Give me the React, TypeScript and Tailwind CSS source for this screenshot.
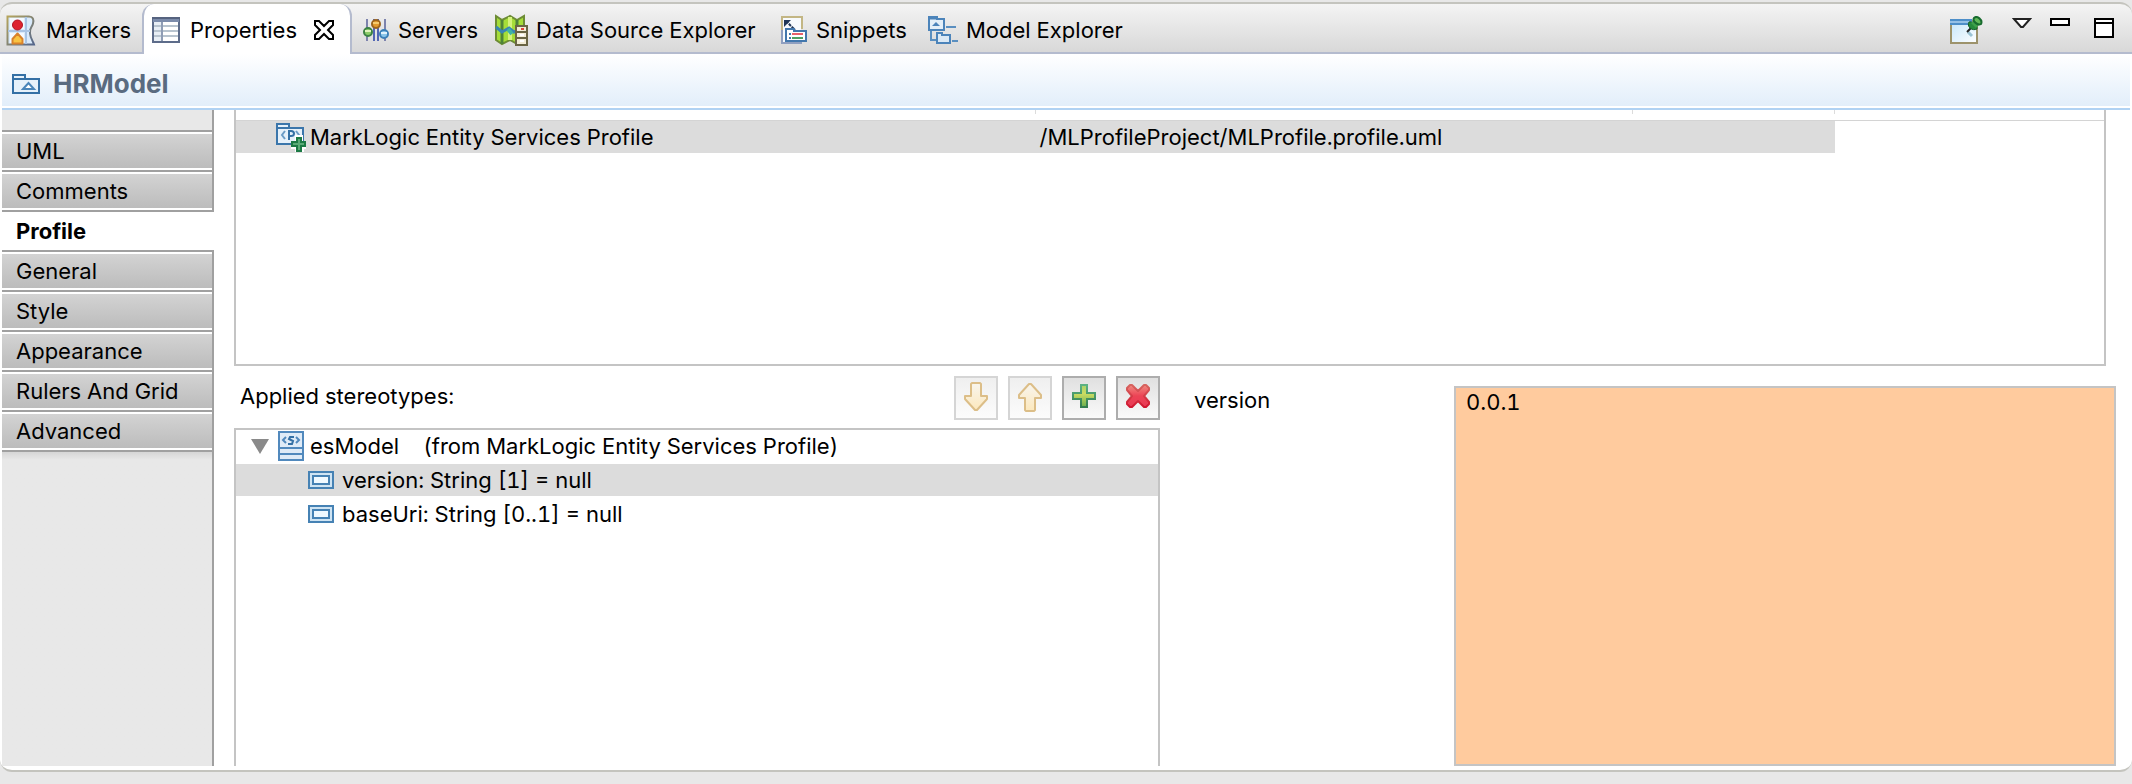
import React, { useState } from 'react';

type IconProps = { className?: string };

const MarkersIcon = ({ className }: IconProps) => (
  <svg className={className} width="30" height="32" viewBox="0 0 30 32" aria-hidden="true">
    <defs>
      <linearGradient id="mkBorder" x1="0" y1="0" x2="1" y2="1">
        <stop offset="0" stopColor="#b5a45c" />
        <stop offset="1" stopColor="#55678c" />
      </linearGradient>
    </defs>
    <path d="M1.500 2.500H23c4 0 5 3 4 7-1 4-4 5-3 10 .5 5 3 8 4 11H1.500z" fill="#d9eafb" stroke="url(#mkBorder)" strokeWidth="2" />
    <path d="M2 17h22M20 3v27" stroke="#a9c4e4" strokeWidth="2" />
    <path d="M4 4h14v11H4zM4 19h14v10H4z" fill="#f4f9ff" />
    <circle cx="11.500" cy="11" r="5" fill="#dd2431" stroke="#b31524" />
    <path d="M6.500 29.500v-4.500l5-5.500 5 5.500v4.500z" fill="#f9c342" stroke="#d9822b" strokeWidth="2" strokeLinejoin="round" />
  </svg>
);

const PropertiesIcon = ({ className }: IconProps) => (
  <svg className={className} width="28" height="26" viewBox="0 0 28 26" aria-hidden="true">
    <path d="M1 1h26v24H1z" fill="#fff" stroke="#5d6c8a" strokeWidth="2" />
    <path d="M1 1h26v4H1z" fill="#7c8cab" />
    <path d="M0 1h28" stroke="#56637f" strokeWidth="2" />
    <path d="M2 5h8v19H2z" fill="#e8eef5" />
    <path d="M2 9h24M2 14h24M2 19h24" stroke="#b8c4cf" strokeWidth="2" />
    <path d="M10 5v19" stroke="#8f9db5" strokeWidth="2" />
  </svg>
);

const CloseIcon = () => (
  <svg width="22" height="22" viewBox="0 0 22 22" aria-hidden="true">
    <path d="M2 2h4l5 5 5-5h4v4l-5 5 5 5v4h-4l-5-5-5 5H2v-4l5-5-5-5z" fill="#fff" stroke="#000" strokeWidth="2" />
  </svg>
);

const ServersIcon = ({ className }: IconProps) => (
  <svg className={className} width="28" height="26" viewBox="0 0 28 26" aria-hidden="true">
    <path d="M5 2v22M23 2v22" stroke="#7d83ad" strokeWidth="2" />
    <path d="M12 2v22M16 2v22" stroke="#5367b4" strokeWidth="2" />
    <circle cx="14" cy="7" r="4" fill="#e39a2c" stroke="#9d641c" strokeWidth="2" />
    <path d="M11 6h6" stroke="#f7ca6c" strokeWidth="2" />
    <circle cx="6" cy="15" r="4" fill="#8bcb69" stroke="#3c8244" strokeWidth="2" />
    <path d="M3 14h6" stroke="#e1f4bd" strokeWidth="2" />
    <circle cx="22" cy="17" r="4" fill="#8bc6ea" stroke="#3c80b8" strokeWidth="2" />
    <path d="M19 16h6" stroke="#dff2fc" strokeWidth="2" />
  </svg>
);

const DataSourceIcon = ({ className }: IconProps) => (
  <svg className={className} width="34" height="32" viewBox="0 0 34 32" aria-hidden="true">
    <path d="M2 2l6 4 8-4 7 4 7-4v25l-7 3-7-4-8 4-6-4z" fill="#a5dd38" stroke="#6d8c35" strokeWidth="2" />
    <path d="M8 6v24M23 6v24" stroke="#4e8438" strokeWidth="3" />
    <path d="M16 3v23" stroke="#d4f37b" strokeWidth="4" />
    <path d="M2 13l6 5 7-4 5 4 10-4" stroke="#3985b4" strokeWidth="3" fill="none" />
    <path d="M14 15l4 5" stroke="#3fb4a3" strokeWidth="4" />
    <path d="M22 12h11v19H22z" fill="#f2ecd6" stroke="#6a6544" strokeWidth="2" />
    <path d="M22 18h11M22 24h11" stroke="#6a6544" strokeWidth="2" />
    <path d="M27 15h3" stroke="#e0453a" strokeWidth="2" />
    <path d="M26 21h4M26 27h4" stroke="#fff" strokeWidth="2" />
  </svg>
);

const SnippetsIcon = ({ className }: IconProps) => (
  <svg className={className} width="28" height="28" viewBox="0 0 28 28" aria-hidden="true">
    <path d="M2 1h19v26H2z" fill="#f7fafd" />
    <path d="M2 26V1h20v12" fill="none" stroke="#c3b684" strokeWidth="2" />
    <path d="M2 14v13h20" fill="none" stroke="#8f9fc0" strokeWidth="2" />
    <path d="M6 5l9 9" stroke="#203657" strokeWidth="2" strokeDasharray="3 1" />
    <path d="M4 4h7L4 11z" fill="#203657" />
    <path d="M6 13h8v2h12v10H6z" fill="#fff" stroke="#4277ad" strokeWidth="2" />
    <path d="M9 18h2M9 22h2" stroke="#4277ad" strokeWidth="2" />
    <path d="M12 18h11" stroke="#e8606a" strokeWidth="2" />
    <path d="M12 22h11" stroke="#4f9f62" strokeWidth="2" />
  </svg>
);

const ModelExplorerIcon = ({ className }: IconProps) => (
  <svg className={className} width="30" height="28" viewBox="0 0 30 28" aria-hidden="true">
    <path d="M3 14v10h7" fill="none" stroke="#5a8fc0" strokeWidth="2" />
    <path d="M1 1h8v2h7v11H1z" fill="#e4eff8" stroke="#4c84ba" strokeWidth="2" />
    <path d="M1 2h8" stroke="#4c84ba" strokeWidth="3" />
    <path d="M4 10l4-4 4 4z" fill="#4c84ba" />
    <path d="M18 11h10M24 25h6" stroke="#5a8fc0" strokeWidth="2" />
    <path d="M9 17h5v2h8v8H9z" fill="#dbe9f5" stroke="#4c84ba" strokeWidth="2" />
  </svg>
);

const PinIcon = () => (
  <svg width="34" height="30" viewBox="0 0 34 30" aria-hidden="true">
    <defs>
      <linearGradient id="pinPage" x1="0" y1="0" x2="1" y2="1">
        <stop offset="0" stopColor="#c5e6fb" />
        <stop offset="1" stopColor="#fff" />
      </linearGradient>
    </defs>
    <path d="M1 5h26v22H1z" fill="url(#pinPage)" stroke="#9d936c" strokeWidth="2" />
    <path d="M0 3h22v6H0z" fill="#4e8fc9" />
    <path d="M0 6h20" stroke="#95c0e6" strokeWidth="2" />
    <path d="M18 16l4 4" stroke="#9bc3d4" strokeWidth="3" />
    <path d="M17 16l6-6" stroke="#222" strokeWidth="2" />
    <path d="M19 6c-1 2-1 4 1 6 2 2 5 2 7 1 1-3-4-8-8-7z" fill="#268b3c" stroke="#145f2a" />
    <path d="M21 7l5-5 5 5-5 5z" fill="#3fa04a" />
    <path d="M24 2c3-3 9 2 7 6-3 2-9-3-7-6z" fill="#62b959" stroke="#176b2e" strokeWidth="2" />
  </svg>
);

const MenuIcon = () => (
  <svg width="20" height="12" viewBox="0 0 20 12" aria-hidden="true">
    <path d="M2 1h16l-7 8h-2z" fill="#fff" stroke="#222" strokeWidth="2" />
  </svg>
);

const MinimizeIcon = () => (
  <svg width="20" height="8" viewBox="0 0 20 8" aria-hidden="true">
    <path d="M1 1h18v6H1z" fill="#fff" stroke="#000" strokeWidth="2" />
  </svg>
);

const MaximizeIcon = () => (
  <svg width="20" height="20" viewBox="0 0 20 20" aria-hidden="true">
    <path d="M1 1h18v18H1zM1 5h18" fill="#fff" stroke="#000" strokeWidth="2" />
  </svg>
);

const ModelIcon = () => (
  <svg width="30" height="22" viewBox="0 0 30 22" aria-hidden="true">
    <path d="M2 2h12v4h14v14H2z" fill="#e6f1fa" stroke="#3470a5" strokeWidth="2" />
    <path d="M2 6h13" stroke="#3470a5" strokeWidth="2" />
    <path d="M12 16l5.500-6 5.500 6z" fill="#fff" stroke="#4a86ba" strokeWidth="2" />
  </svg>
);

const ProfileIcon = ({ className }: IconProps) => (
  <svg className={className} width="31" height="30" viewBox="0 0 31 30" aria-hidden="true">
    <path d="M2 2h12v4h14v16H2z" fill="#e6f1fa" stroke="#3b76ab" strokeWidth="2" />
    <path d="M2 6h13" stroke="#3b76ab" strokeWidth="2" />
    <path d="M10 9l-3 4 3 4M21 9l3 4-3 4" fill="none" stroke="#6b9cc6" strokeWidth="2" />
    <path d="M14 18V9h2c4 0 4 5 0 5h-2" fill="none" stroke="#3470a5" strokeWidth="2" />
    <path d="M20 13h8v6h3v8h-2v3h-9v-3h-4v-8h4z" fill="#fff" />
    <path d="M22 16h4v4h4v4h-4v5h-4v-5h-5v-4h5z" fill="#5aab77" stroke="#1c7a45" strokeWidth="2" />
  </svg>
);

const StereotypeIcon = ({ className }: IconProps) => (
  <svg className={className} width="26" height="30" viewBox="0 0 26 30" aria-hidden="true">
    <path d="M1 1h24v28H1z" fill="#dfebf7" stroke="#5189bd" strokeWidth="2" />
    <path d="M1 17h24M1 23h24" stroke="#5189bd" strokeWidth="2" />
    <path d="M8 6L5 9l3 3M18 6l3 3-3 3" fill="none" stroke="#5189bd" strokeWidth="2" />
    <path d="M16 6h-4l-1 2 4 2-1 3h-4" fill="none" stroke="#3470a5" strokeWidth="2" />
  </svg>
);

const PropertyIcon = ({ className }: IconProps) => (
  <svg className={className} width="26" height="18" viewBox="0 0 26 18" aria-hidden="true">
    <path d="M1 1h24v16H1z" fill="#cfe4f3" stroke="#4682b4" strokeWidth="2" />
    <path d="M5 5h16v8H5z" fill="#f0f9ff" stroke="#4682b4" strokeWidth="2" />
  </svg>
);

const ArrowIcon = ({ up = false }: { up?: boolean }) => (
  <svg width="26" height="30" viewBox="0 0 26 30" aria-hidden="true" className={up ? 'rotate-180' : ''}>
    <defs>
      <linearGradient id={up ? 'arrowUp' : 'arrowDown'} x1="0" y1={up ? 1 : 0} x2="0" y2={up ? 0 : 1}>
        <stop offset="0" stopColor="#f8f5ee" />
        <stop offset="1" stopColor="#fce8bd" />
      </linearGradient>
    </defs>
    <path d="M9 1h8l1 1v12h6v3L14 28h-2L2 17v-3h6V2z" fill={up ? 'url(#arrowUp)' : 'url(#arrowDown)'} stroke="#dcbe88" strokeWidth="2" strokeLinejoin="round" />
  </svg>
);

const AddIcon = () => (
  <svg width="26" height="26" viewBox="0 0 26 26" aria-hidden="true">
    <defs>
      <linearGradient id="addFill" x1="0" y1="0" x2="0" y2="1">
        <stop offset="0" stopColor="#a9d26c" />
        <stop offset="0.400" stopColor="#cbdc62" />
        <stop offset="1" stopColor="#69ae4d" />
      </linearGradient>
      <linearGradient id="addEdge" x1="0" y1="0" x2="0" y2="1">
        <stop offset="0" stopColor="#5cb283" />
        <stop offset="1" stopColor="#337c4e" />
      </linearGradient>
    </defs>
    <path d="M10 2h6v8h8v6h-8v8h-6v-8H2v-6h8z" fill="url(#addFill)" stroke="url(#addEdge)" strokeWidth="2" />
  </svg>
);

const RemoveIcon = () => (
  <svg width="26" height="26" viewBox="0 0 26 26" aria-hidden="true">
    <defs>
      <linearGradient id="removeFill" x1="0" y1="0" x2="0" y2="1">
        <stop offset="0" stopColor="#f08a80" />
        <stop offset="0.500" stopColor="#ec4355" />
        <stop offset="1" stopColor="#e83a55" />
      </linearGradient>
      <linearGradient id="removeEdge" x1="0" y1="0" x2="0" y2="1">
        <stop offset="0" stopColor="#d66560" />
        <stop offset="1" stopColor="#d0152f" />
      </linearGradient>
    </defs>
    <path d="M5 2h2l6 6 6-6h2l3 3v2l-5 6 5 6v2l-3 3h-2l-6-6-6 6H5l-3-3v-2l5-6-5-6V5z" fill="url(#removeFill)" stroke="url(#removeEdge)" strokeWidth="2" strokeLinejoin="round" />
  </svg>
);

const sections = ['UML', 'Comments', 'Profile', 'General', 'Style', 'Appearance', 'Rulers And Grid', 'Advanced'];

function ViewTabs() {
  return (
    <header className="flex h-[52px] items-stretch overflow-hidden rounded-t-[12px] border-t-2 border-[#c4c4be] bg-linear-to-b from-[#f4f4f4] to-[#d7d7d7]">
      <nav className="flex flex-none items-stretch" aria-label="Views">
        <button className="flex w-[142px] items-center gap-[10px] border-b-2 border-[#b4bbce] pl-[6px] pt-1">
          <MarkersIcon />
          Markers
        </button>
        <div className="flex w-[210px] items-center rounded-t-[12px] border-x-2 border-[#b4bbce] bg-white pl-2 pt-[2px]">
          <button className="flex items-center gap-[10px]">
            <PropertiesIcon />
            Properties
          </button>
          <button className="ml-4" aria-label="Close Properties">
            <CloseIcon />
          </button>
        </div>
        <button className="flex w-[138px] items-center gap-2 border-b-2 border-[#b4bbce] pl-[10px] pt-1">
          <ServersIcon />
          Servers
        </button>
        <button className="flex w-[286px] items-center gap-2 border-b-2 border-[#b4bbce] pl-1 pt-1">
          <DataSourceIcon />
          Data Source Explorer
        </button>
        <button className="flex w-[148px] items-center gap-2 border-b-2 border-[#b4bbce] pl-1 pt-1">
          <SnippetsIcon />
          Snippets
        </button>
        <button className="flex items-center gap-2 border-b-2 border-[#b4bbce] pl-1 pt-1">
          <ModelExplorerIcon />
          Model Explorer
        </button>
      </nav>
      <div className="flex flex-1 items-start justify-end border-b-2 border-[#b4bbce] pr-[18px] pt-3">
        <button className="mr-7" aria-label="Pin view"><PinIcon /></button>
        <div className="flex items-start pt-[2px]">
          <button className="mr-[18px]" aria-label="View menu"><MenuIcon /></button>
          <button className="mr-6" aria-label="Minimize"><MinimizeIcon /></button>
          <button aria-label="Maximize"><MaximizeIcon /></button>
        </div>
      </div>
    </header>
  );
}

function SectionList() {
  const [active, setActive] = useState('Profile');
  return (
    <nav className="ml-[2px] flex w-[212px] flex-none flex-col" aria-label="Property sections">
      <div className="h-[22px] border-b-2 border-b-[#a0a0a0]">
        <div className="h-[20px] border-r-2 border-[#a0a0a0] bg-[#e8e8e8]" />
      </div>
      {sections.map((name) =>
        name === active ? (
          <button key={name} className="h-10 border-b-2 border-[#a0a0a0] pl-[14px] text-left font-bold" aria-current="true">
            {name}
          </button>
        ) : (
          <button key={name} onClick={() => setActive(name)} className="h-10 border-b-2 border-r-2 border-[#a0a0a0] bg-white py-[2px] text-left">
            <span className="flex h-[34px] items-center bg-linear-to-b from-[#d3d3d3] to-[#bcbcbc] pl-[14px]">{name}</span>
          </button>
        ),
      )}
      <div className="flex-1 border-r-2 border-[#a0a0a0] bg-linear-to-b from-[#d6d6d6] to-[#e8e8e8] to-[8px]" />
    </nav>
  );
}

function ProfileTable() {
  return (
    <div className="mr-[10px] h-[256px] border-x-2 border-b-2 border-[#c4c4c4]">
      <table className="w-full table-fixed border-collapse">
        <colgroup>
          <col className="w-[42.800%]" />
          <col className="w-[32%]" />
          <col className="w-[10.800%]" />
          <col />
        </colgroup>
        <thead>
          <tr className="h-[10px] border-b border-[#d4d4d4]">
            {['Name', 'Location', 'Version', 'Remarks'].map((label) => (
              <th key={label} aria-label={label} className="h-[10px] p-0 align-top">
                <div className={label === 'Remarks' ? 'h-1' : 'h-1 border-r border-[#dcdcdc]'} />
              </th>
            ))}
          </tr>
        </thead>
        <tbody>
          <tr className="h-8">
            <td className="bg-[#dcdcdc] p-0">
              <div className="flex h-8 items-center gap-1 pl-[39px]">
                <ProfileIcon className="flex-none" />
                MarkLogic Entity Services Profile
              </div>
            </td>
            <td className="bg-[#dcdcdc] p-0 pl-1">/MLProfileProject/MLProfile.profile.uml</td>
            <td className="bg-[#dcdcdc] p-0" />
            <td className="p-0" />
          </tr>
        </tbody>
      </table>
    </div>
  );
}

function Stereotypes() {
  const enabled = 'border-[#adadad] bg-linear-to-b from-[#e0e0e0] to-[#fafafa]';
  const disabled = 'border-[#d5d5d5] bg-linear-to-b from-[#efefef] to-[#fcfcfc]';
  const button = 'flex size-11 justify-center border-2';
  return (
    <section className="flex min-w-0 flex-col pt-[10px]">
      <div className="flex justify-between pl-[6px]">
        <h2 className="pt-1">Applied stereotypes:</h2>
        <div className="flex gap-[10px]">
          <button disabled aria-label="Move down" className={`${button} ${disabled} pt-1`}><ArrowIcon /></button>
          <button disabled aria-label="Move up" className={`${button} ${disabled} pt-1`}><ArrowIcon up /></button>
          <button aria-label="Add stereotype" className={`${button} ${enabled} pt-[5px]`}><AddIcon /></button>
          <button aria-label="Remove stereotype" className={`${button} ${enabled} pt-[5px]`}><RemoveIcon /></button>
        </div>
      </div>
      <ul className="mt-2 flex flex-1 flex-col gap-[2px] border-x-2 border-t-2 border-[#c4c4c4]" role="tree">
        <li className="flex h-8 items-center pl-[15px]" role="treeitem" aria-expanded="true">
          <svg width="18" height="15" viewBox="0 0 18 15" aria-hidden="true"><path d="M0 0h18L9 15z" fill="#8a8a8a" /></svg>
          <StereotypeIcon className="ml-[9px] mr-[6px]" />
          <span>esModel</span>
          <span className="ml-6">(from MarkLogic Entity Services Profile)</span>
        </li>
        <li className="flex h-8 items-center gap-2 bg-[#dcdcdc] pl-[72px]" role="treeitem" aria-selected="true">
          <PropertyIcon />
          version: String [1] = null
        </li>
        <li className="flex h-8 items-center gap-2 pl-[72px]" role="treeitem">
          <PropertyIcon />
          baseUri: String [0..1] = null
        </li>
      </ul>
    </section>
  );
}

export default function App() {
  return (
    <div className="flex min-h-screen flex-col bg-[#e8e8e8] pt-[2px] font-['Inter','Liberation_Sans',sans-serif] text-[22px] leading-8 tabular-nums text-black">
      <ViewTabs />
      <main className="flex flex-1 flex-col rounded-b-[12px] border-b-2 border-[#c4c4be] bg-white">
        <div className="mx-[2px] flex-none border-b-2 border-[#b0d2f3] pb-[2px]">
          <div className="flex h-[52px] items-center gap-3 bg-linear-to-b from-white to-[#e2eefa] pl-[9px] pt-2">
            <ModelIcon />
            <h1 className="text-[26px] font-bold text-[#5a6b80]">HRModel</h1>
          </div>
        </div>
        <div className="mb-1 flex flex-1">
          <SectionList />
          <div className="ml-5 mr-4 flex min-w-0 flex-1 flex-col">
            <ProfileTable />
            <div className="grid flex-1 grid-cols-[minmax(0,926fr)_minmax(0,956fr)]">
              <Stereotypes />
              <div className="flex pl-[34px] pt-5 leading-7">
                <label htmlFor="version" className="w-[260px] flex-none">version</label>
                <textarea id="version" defaultValue="0.0.1" className="min-w-0 flex-1 resize-none border-2 border-[#c4c4c4] bg-[#ffcb9e] px-[10px] leading-7 outline-none" />
              </div>
            </div>
          </div>
        </div>
      </main>
      <div className="h-3 flex-none" />
    </div>
  );
}
